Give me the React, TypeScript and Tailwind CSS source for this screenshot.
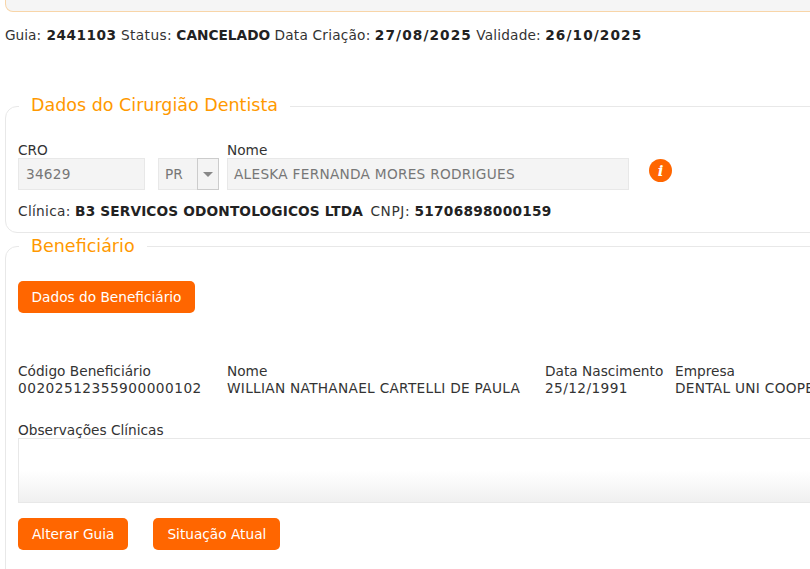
const sans = "font-['DejaVu_Sans',sans-serif]";

function B({ children, track = "" }: { children: React.ReactNode; track?: string }) {
  return <b className={`font-bold text-[#222] ${track}`}>{children}</b>;
}

function Btn({ children, className = "px-[14px]" }: { children: React.ReactNode; className?: string }) {
  return (
    <button className={`h-8 rounded-[5px] bg-[#ff6600] text-white text-[13.7px] ${className}`}>{children}</button>
  );
}

function Field({ w, label, value, track }: { w: string; label: string; value: string; track: string }) {
  return (
    <div className={w}>
      <div className="leading-[17px]">{label}</div>
      <div className={`leading-[17px] whitespace-nowrap ${track}`}>{value}</div>
    </div>
  );
}

export default function App() {
  return (
    <div className={`${sans} w-[810px] h-[569px] overflow-hidden bg-white text-[13.7px] text-[#333]`}>
      <div className="w-[900px] pl-[5px]">
        <div className="h-3 bg-[#f5f5f5] border border-t-0 border-[#f8d5a8] rounded-b-[8px]" />
        <p className="mt-[14px] leading-[18px] whitespace-nowrap">
          Guia: <B track="tracking-[0.5px] ml-px">2441103</B> <span className="tracking-[0.4px]">Status:</span> <B>CANCELADO</B>{" "}
          <span className="tracking-[0.2px]">Data Criação:</span> <B track="tracking-[1.1px]">27/08/2025</B>{" "}
          <span className="tracking-[0.15px]">Validade:</span> <B track="tracking-[1.1px]">26/10/2025</B>
        </p>
        <fieldset className="mt-[50px] h-[139px] border border-[#e8e8e8] rounded-[12px] px-3">
          <legend className="ml-px px-[12px] pb-[2px] text-[17.5px] leading-[22px] text-[#ff9900]">Dados do Cirurgião Dentista</legend>
          <div className="mt-[24px] flex items-end">
            <div className="w-[140px]">
              <div className="leading-[16px]">CRO</div>
              <div className="h-8 w-[127px] bg-[#f4f4f4] border border-[#e8e8e8] px-[7px] leading-[30px] text-[#777] tracking-[0.2px]">34629</div>
            </div>
            <div className="w-[61px] mr-[8px] h-8 flex bg-[#f4f4f4] border border-[#e8e8e8]">
              <div className="w-[38px] px-[6px] leading-[30px] text-[#777]">PR</div>
              <div className="flex-1 -my-px -mr-px border border-[#cccccc] flex items-center justify-center">
                <div className="w-0 h-0 border-x-[5px] border-x-transparent border-t-[5px] border-t-[#888]" />
              </div>
            </div>
            <div>
              <div className="leading-[16px]">Nome</div>
              <div className="h-8 w-[402px] bg-[#f4f4f4] border border-[#e8e8e8] px-[6px] leading-[30px] text-[#777] whitespace-nowrap tracking-[0.26px]">ALESKA FERNANDA MORES RODRIGUES</div>
            </div>
            <svg className="ml-[20px] mb-[8px]" width="23" height="23" viewBox="0 0 23 23">
              <circle cx="11.5" cy="11.5" r="11.5" fill="#ff6600" />
              <text x="11.5" y="17" textAnchor="middle" fill="#fff" fontFamily="DejaVu Serif" fontWeight="bold" fontStyle="italic" fontSize="15">i</text>
            </svg>
          </div>
          <p className="mt-[12px] leading-[18px] whitespace-nowrap">
            <span className="tracking-[0.32px]">Clínica:</span> <B track="tracking-[0.14px]">B3 SERVICOS ODONTOLOGICOS LTDA</B>{" "}
            <span className="tracking-[0.6px] ml-[3px]">CNPJ:</span> <B track="tracking-[0.27px]">51706898000159</B>
          </p>
        </fieldset>
        <fieldset className="mt-[2px] h-[400px] border border-[#e8e8e8] rounded-[12px] px-3">
          <legend className="ml-px px-[12px] text-[17.5px] leading-[22px] text-[#ff9900]">Beneficiário</legend>
          <div className="mt-[24px]"><Btn className="w-[177px]">Dados do Beneficiário</Btn></div>
          <div className="mt-[50px] flex">
            <Field w="w-[209px]" label="Código Beneficiário" value="00202512355900000102" track="tracking-[0.48px]" />
            <Field w="w-[318px]" label="Nome" value="WILLIAN NATHANAEL CARTELLI DE PAULA" track="tracking-[0.28px]" />
            <Field w="w-[130px]" label="Data Nascimento" value="25/12/1991" track="tracking-[0.4px]" />
            <Field w="w-[300px]" label="Empresa" value="DENTAL UNI COOPERATIVA ODONTOLOGICA" track="tracking-[0.28px]" />
          </div>
          <div className="mt-[25px] leading-[17px]">Observações Clínicas</div>
          <div className="h-[65px] -mt-px border border-[#e8e8e8] bg-gradient-to-b from-white from-50% to-[#f0f0f0]" />
          <div className="mt-[15px] flex gap-[25px]">
            <Btn>Alterar Guia</Btn>
            <Btn>Situação Atual</Btn>
          </div>
        </fieldset>
      </div>
    </div>
  );
}
